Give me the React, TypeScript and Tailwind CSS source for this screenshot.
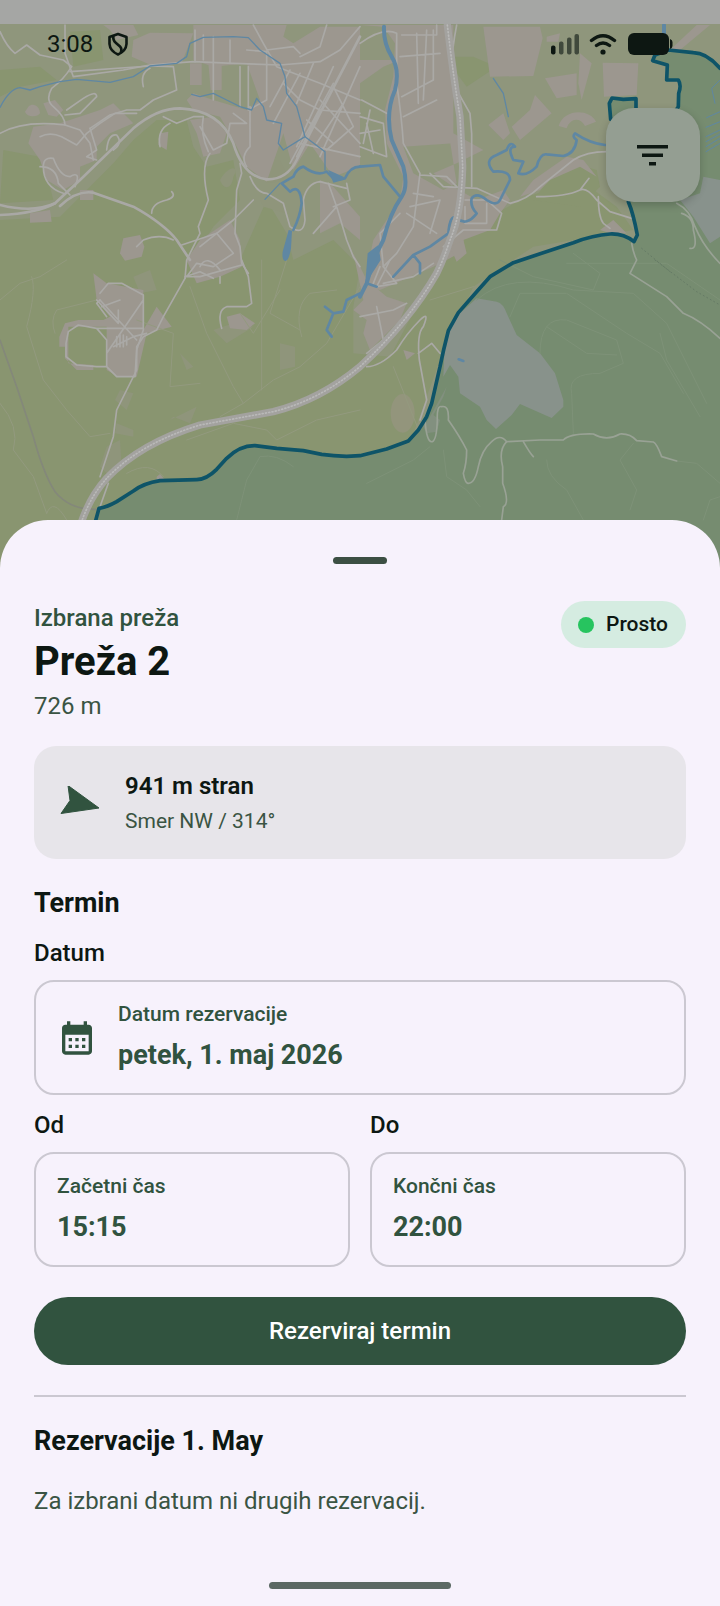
import { useState } from 'react';

interface PickerFieldProps {
  id: string;
  label: string;
  hint: string;
  value: string;
  withIcon?: boolean;
}

const urbanAreas = [
  'M310 75H400L415 105 350 120 330 90Z',
  'M450 98L580 100 545 190 465 200 395 170 400 120Z',
  'M580 75H860L850 110 880 130 960 80H1080V500L1000 530 930 430 880 510 850 400 800 545 740 500 700 420 660 350 580 330 560 300 580 280 640 300 740 330 780 300 740 190 640 200 580 180Z',
  'M570 190H605V255H570ZM625 190H665V270H632Z',
  'M1080 75L1150 80 1185 130 1180 230 1155 330 1160 430 1210 530 1200 600 1120 720 1090 860 1140 870 1230 830 1300 800 1340 780 1395 750 1390 720 1470 690 1500 640 1530 600 1510 570 1430 600 1360 560 1300 520 1370 490 1450 450 1360 400 1355 75H1300L1320 75 1330 300 1370 550 1330 570 1240 520 1210 440 1360 430V75Z',
  'M1450 80H1620L1628 115 1600 228 1470 230ZM1635 235L1730 220V285L1670 295ZM1740 160L1775 190 1745 300 1735 250ZM1808 188L1915 190 1910 285 1812 290Z',
  'M1590 330L1605 285 1655 340 1560 420 1535 380ZM1676 378C1690 325 1770 325 1788 365L1755 378C1740 350 1710 355 1700 385ZM1465 375L1510 340 1530 400 1510 420Z',
  'M1640 110L1680 100 1675 125 1640 125ZM2010 150L2090 75H2130L2040 150Z',
  'M1600 540L1700 470 1750 480 1790 530 1740 500 1650 540 1620 570 1560 590Z',
  'M1800 690L1840 660 1880 700 1830 700ZM1350 740L1390 720 1400 760 1370 785Z',
  'M100 380L180 370 300 330 340 310 400 370 330 400 290 440 290 480 240 500 240 540 190 570 140 540 120 480 85 430Z',
  'M85 320C100 305 120 320 120 340 110 355 80 350 75 335ZM130 310L165 300 190 330 170 350 145 345Z',
  'M370 715L420 705 433 740 425 770 375 782 360 760Z',
  'M480 400L505 395 500 450 475 435ZM570 360L640 350 680 400 660 460 610 470 590 400Z',
  'M960 540L1000 560 1080 650 1080 720 1020 670 960 700Z',
  'M920 220L960 180H1180L1240 120 1270 150 1150 200 1080 250 1010 250Z',
  'M600 720L690 660 720 720 725 800 660 830 590 850 560 780Z',
  'M280 820L320 850 430 870V990L470 920 515 980 440 1000 410 1130H355L320 1110V980L290 980H205V1090L280 1095V1110H230L195 1075V1040H178V1010L195 970 235 960H280L310 960 330 950 290 900Z',
  'M680 950L720 940 765 970 740 990 690 985ZM1060 760L1100 840 1160 890 1220 910 1200 960 1110 1050 1090 1000 1100 960 1060 930 1090 900Z',
  'M90 640L150 630 155 665 90 668ZM240 570H280V600H240Z',
  'M1210 1050L1245 1060 1220 1080ZM470 1430L480 1422 495 1440 470 1440Z',
];

const forestAreas = [
  'M0 660L180 650 240 590 340 490 400 420 470 360 560 360 580 440 620 500 700 480 720 600 640 680 590 760 720 780 800 600 860 700 880 780 1000 720 1080 800 1060 920 1060 1060 1170 1070 1260 900 1330 780 1450 660 1580 590 1740 540 1850 620 1900 690 1600 740 1420 860 1320 1080 1230 1330 1060 1370 760 1340 620 1440 450 1450 290 1540 230 1780 0 1780Z',
  'M10 450L120 470 150 560 160 600 0 610Z',
  'M1360 170H1420L1490 200 1400 260 1370 220Z',
  'M1690 480L1790 510 1800 560 1740 620 1600 600Z',
  'M210 95L300 90 310 180 220 200ZM0 210L120 200 170 240 60 260 0 290Z',
];

const fieldAreas = [
  'M660 540C690 490 720 500 700 530 695 570 670 570 660 540Z',
  'M400 830L450 810 470 870 420 880ZM540 1060L580 1100 560 1110ZM360 1170L400 1180 380 1230 345 1200ZM350 1270L400 1290 400 1310 345 1300Z',
  'M840 1030L885 1040 885 1100 840 1110ZM510 1260L590 1220 570 1270 520 1250ZM640 990L700 970 760 980 680 1030Z',
  'M760 480L840 480 870 540 800 550ZM780 600L840 600 860 640 790 620Z',
  'M320 1340L360 1320 365 1400 330 1430 300 1400Z',
];

const minorRoads = [
  'M0 95Q20 140 45 160L80 135 120 165 190 180 215 200Q190 240 155 265 135 300 160 320 195 350 195 375L240 390 270 430 280 480',
  'M0 400Q70 360 195 375M195 75V160L220 230 370 210 450 195 580 185 700 190 840 195 960 185 1020 150 1080 80',
  'M210 215L450 198 520 200 530 270 460 300 420 330 380 330 330 345 270 385',
  'M195 345L240 340 290 290Q290 270 250 295L200 330M430 260Q420 220 450 205',
  'M120 410Q150 395 185 410L230 435 260 400 300 370 345 340 410 340',
  'M190 580Q130 560 130 500 130 470 160 475 180 530 210 530 245 510 225 560M120 500Q170 500 175 550L210 585',
  'M270 385L290 450 260 470 290 480M320 450Q325 400 350 405 370 430 340 450',
  'M640 110V300M585 90V185M610 105V180M690 190V120M740 150L800 155V300L745 330V200M720 200V320',
  'M760 75L790 130 830 200 960 250 1080 300M870 210L810 320M900 220L820 370M940 190L890 310M1000 200L890 440M800 150L880 140 900 160M980 75L960 140 900 170',
  'M850 250L900 300 960 330 1080 340M900 430L1080 470M960 300L1080 430M920 360L1000 430M960 470L1080 200M1000 260L1060 380 980 450M1030 310L950 430',
  'M490 350L530 370 580 350 610 350Q600 400 625 455M480 440Q470 390 510 370M600 380L640 450 680 430 690 370 740 370 700 340M750 320V440Q720 470 740 500',
  'M630 460Q600 500 625 600L595 680 600 700 560 780 555 835M720 490L725 520 710 570 705 700 720 740 725 790 745 820',
  'M455 640Q455 610 500 600 530 590 515 575M520 720Q480 700 430 720L410 740M545 735L590 720 650 700 700 660 760 600',
  'M600 740L650 700 700 760 640 800 590 790 560 830 600 830 725 795M600 800Q620 760 660 810M750 530Q770 580 800 580L850 610 870 680Q910 710 915 660L910 600Q920 550 960 545L1040 565',
  'M985 550L1010 620 940 700M1010 620L1040 720 1060 770 1080 800M1040 550L1050 600 1000 620',
  'M1290 520L1330 560 1430 565 1530 610Q1580 600 1620 560L1720 480Q1760 455 1820 455M1610 590Q1700 590 1740 570 1760 560 1790 600L1830 635 1895 655M1740 570L1767 535M1795 590Q1795 650 1810 670L1830 685',
  'M1080 130Q1150 80 1190 100V250Q1205 350 1210 430L1260 520 1250 600 1240 680 1190 760 1150 800M1260 525L1340 530 1370 560',
  'M1370 75Q1340 230 1370 270L1410 340 1415 400V560M1200 170L1320 160M1205 105H1310V75M1205 290L1300 240V90M1210 350L1310 300M1250 100L1255 310M1280 90L1270 300',
  'M1080 350L1150 370 1160 470 1080 440M1080 400L1140 390M1085 300L1160 340M1100 370L1120 460M1110 330L1090 430',
  'M1230 620L1320 600 1290 700M1395 600H1460L1505 640 1490 690 1390 690 1330 740M1395 620V670H1460V610M1240 580L1300 590M1220 640L1310 700',
  'M1200 640L1140 700 1150 800 1190 850 1130 860 1170 780M1150 850L1240 830 1300 790M1080 950L1180 930 1220 910M1130 920L1150 1020 1100 1060M1140 800L1120 850',
  'M555 830L600 815 640 835M555 835L490 950 470 990 430 1010 410 1040V1110L350 1230 340 1310 320 1370 300 1430M325 1450L300 1520',
  'M300 880L325 850H365L430 885V990L410 1050 405 1130H350L320 1100V1020L290 985 235 975 205 995 198 1030V1070L230 1095 290 1100H320M290 985H430M300 900L410 1020M430 900L320 1060M305 920L360 900M355 930V970L290 900',
  'M350 1010V1040M360 1005V1040M370 1005V1040M380 1010V1035M340 1040L400 1010 440 1000M300 900L290 910 320 950',
  'M725 780L745 830 755 910 740 920H680Q650 930 665 985M660 830V850',
  'M1100 1100Q1140 1100 1190 1050 1220 1000 1260 960 1290 930 1270 980 1250 1000 1258 1080L1280 1200 1260 1260M1255 1060L1295 1030 1320 1060',
];

const hillRoads = [
  'M1895 730Q1900 760 1910 780L1890 820 2000 890 2050 940Q2100 960 2160 1015',
  'M2030 610Q2070 630 2085 680 2110 740 2160 790M2045 640Q2080 650 2080 690 2095 750 2070 745',
  'M1275 1260Q1280 1330 1297 1325 1310 1320 1312 1260 1310 1215 1325 1220 1348 1215 1345 1260 1380 1310 1400 1350 1400 1390 1390 1420 1395 1450 1405 1450 1425 1450 1435 1400 1445 1350 1475 1325 1500 1300 1520 1325L1620 1320 1690 1320Q1710 1300 1780 1302 1820 1325 1860 1302 1890 1300 1910 1322L1960 1326Q1970 1330 1985 1370L2030 1383',
  'M1520 1325Q1495 1350 1508 1400V1450Q1530 1510 1510 1520L1505 1560M1570 1325Q1590 1360 1600 1370',
];

const trails = [
  'M0 900L60 850 120 830 200 780M290 900L170 930Q150 960 165 1000',
  'M95 830Q110 870 80 980L130 1140 200 1230 270 1310 330 1300M0 1210Q60 1280 40 1350L100 1430 140 1540',
  'M570 860L620 1000 700 1160 730 1210M785 780V1170M860 780L810 940 900 990M905 1010Q880 920 930 880L1010 870',
  'M1080 860L980 1030 900 1100 820 1140 730 1210 660 1250M560 1320L700 1270 800 1290 830 1320 950 1260 1080 1230',
  'M380 1420Q450 1380 490 1430M1290 900L1420 860M1180 1100L1260 1300',
  'M410 960L520 1000 510 1160 600 1150M720 940L760 1000 840 870M200 1560Q160 1490 140 1540',
];

const hillTrails = [
  'M1430 900Q1530 810 1720 870L1900 880 2000 970 2120 1210M1530 950L1560 880 1700 880 1880 1000 1980 1060 2050 1180',
  'M1620 1060Q1620 950 1700 960L1850 1020 1870 1090 1800 1120Q1700 1120 1715 1180L1720 1300M1640 980L1760 1060 1850 1065',
  'M1330 1350L1340 1430 1400 1470 1440 1520M1100 1450L1240 1380 1290 1340M1640 1380Q1640 1430 1700 1470L1750 1560',
  'M1900 1330L1860 1380 1910 1470 1890 1530M2030 1383L2090 1390 2160 1450M1500 780L1600 830 1780 870 1800 820 1720 760',
  'M1980 1000L2000 1080 2100 1250M1700 790L2000 790 2160 900M2110 1560L2130 1500 2160 1490M710 1560L740 1440 780 1370Q830 1360 880 1400',
];

const streams = [
  'M0 322Q30 265 60 263L90 270 120 260 180 245 230 238 330 247 400 230 450 198 530 190 560 170 570 130 610 112 700 110 745 113 780 150 840 190 855 230 860 280 890 320 915 410 850 450 835 430 845 370 800 360 790 320 770 295 755 330 720 320 680 300 640 280 600 290 575 283',
  'M915 410L975 455 975 510M795 598L840 550M1480 235L1510 280 1525 350',
];

const rivers = [
  'M1080 500Q1050 500 1035 535L1005 540 980 515Q950 530 910 500 890 505 880 530L845 550 870 575Q900 550 905 610 900 650 880 690',
  'M1815 435Q1770 430 1725 400 1715 410 1730 420 1725 460 1690 468L1640 463Q1620 460 1610 500 1580 530 1555 520L1570 485 1540 480Q1520 440 1545 440 1530 420 1520 450L1490 465Q1450 480 1480 515 1530 510 1530 540L1500 600Q1490 620 1460 600 1430 575 1415 595 1410 620 1430 640 1400 680 1370 655 1350 640 1345 700L1290 740 1240 765 1180 830M1240 765L1260 790 1260 820M1080 500L1140 495 1150 530 1200 590M1100 850L1130 860M1080 880L1040 900 1030 935 1000 940 975 920M1000 940L980 990 995 1010',
];

const motorway =
  'M1342 75Q1360 230 1380 350L1388 500Q1385 640 1350 720 1330 780 1310 820 1230 960 1080 1100 960 1200 820 1235L600 1275Q420 1330 320 1435 270 1490 243 1570';

const reserveEdge =
  'M2160 205Q2120 158 2080 158L2005 150 1965 165 1958 182 2002 195 2000 240H2035Q2045 255 2036 280L2035 320 1960 430 1885 605Q1900 640 1912 705L1902 725Q1870 700 1830 702 1780 705 1720 728L1540 788 1470 830 1430 875 1375 938 1345 992Q1330 1050 1320 1100L1295 1210 1280 1250 1255 1290 1225 1323 1160 1347 1080 1367 1040 1369Q1000 1368 965 1363L910 1352 830 1345 765 1337Q720 1336 680 1375L650 1408Q620 1438 590 1439L480 1442Q430 1450 400 1473L350 1505Q320 1522 297 1525L286 1565 280 1590';

function TerrainMap() {
  return (
    <svg
      className="absolute inset-x-0 top-0 h-[570px] w-full"
      viewBox="0 0 2160 1710"
      preserveAspectRatio="xMidYMin slice"
      fill="none"
      strokeLinejoin="round"
      strokeLinecap="round"
      aria-hidden="true"
    >
      <rect width="2160" height="1710" fill="#8f967c" />
      <g fill="#899570">
        {forestAreas.map((d) => <path key={d} d={d} />)}
      </g>
      <g fill="#8f957b">
        {fieldAreas.map((d) => <path key={d} d={d} />)}
      </g>
      <g fill="#9c978f">
        {urbanAreas.map((d) => <path key={d} d={d} />)}
      </g>
      <ellipse cx="1208" cy="1240" rx="36" ry="58" fill="#93957c" />
      <g stroke="#939a7f" strokeWidth="3">
        {trails.map((d) => <path key={d} d={d} />)}
      </g>
      <g stroke="#aaa9a6" strokeWidth="5">
        {minorRoads.map((d) => <path key={d} d={d} />)}
      </g>

      {/* railway */}
      <path d="M0 1020L50 1160 100 1310Q130 1420 165 1475 210 1530 290 1528" stroke="#84887a" strokeWidth="5" />

      {/* main roads */}
      <g stroke="#a9a8a5" strokeWidth="8">
        <path d="M0 645Q110 640 165 610L240 540 400 385Q470 325 540 325 660 330 700 430 730 530 800 538 860 540 890 480L960 340 1080 110" />
        <path d="M0 615Q100 640 165 610M180 618Q230 570 280 578L400 620Q490 670 530 720L570 780" />
        <path d="M890 470L960 330M870 490L1000 250" strokeWidth="5" />
      </g>

      <g stroke="#5f87a3">
        {streams.map((d) => <path key={d} d={d} strokeWidth="4" />)}
        {rivers.map((d) => <path key={d} d={d} strokeWidth="8" />)}
        <path d="M1152 80Q1150 130 1175 170 1200 210 1185 270 1155 340 1175 420L1210 500Q1225 560 1205 590 1170 640 1150 720L1120 780 1100 850 1080 890" strokeWidth="12" />
        <path d="M1992 75V100" strokeWidth="12" />
      </g>
      <g fill="#5f87a3">
        <path d="M1135 735L1142 780 1110 830 1095 860 1103 760Z" />
        <path d="M866 690L876 692 873 745Q866 785 855 783 845 780 848 755Z" />
        <path d="M985 510L1030 530V540L1000 548Z" />
      </g>

      <path d={motorway} stroke="#a3a29f" strokeWidth="22" />
      <path d={motorway} stroke="#b9b9b8" strokeWidth="5" strokeDasharray="3 7" />

      {/* reserve */}
      <path d={`${reserveEdge}V1710H2160Z`} fill="#768c70" />
      <path d="M2040 600L2100 580 2110 530 2160 540V710L2130 730 2080 650Z" fill="#88928c" />
      <path d="M1430 895L1490 905Q1510 910 1520 940L1550 1005 1620 1060 1665 1120 1690 1200V1220L1655 1254 1560 1212 1535 1245 1488 1287 1460 1260 1440 1220 1380 1180 1375 1130 1350 1095 1330 1130 1335 1010 1380 940Z" fill="#88928b" />
      <path d="M1340 1160L1290 1250 1270 1280 1280 1300 1310 1295 1320 1260 1300 1245 1330 1190Z" fill="#82907f" />
      <path d="M1376 1078L1390 1083" stroke="#5f87a3" strokeWidth="8" />
      <g stroke="#7e9278" strokeWidth="3">
        {hillTrails.map((d) => <path key={d} d={d} />)}
      </g>
      <path
        d="M2160 240L2135 265 2145 310M2120 353L2160 335M2118 382L2160 365M2118 410L2160 390M2118 425L2160 402M2118 440L2160 415M2118 455L2160 430"
        stroke="#5f87a3"
        strokeWidth="3"
      />
      <g stroke="#99a295" strokeWidth="5">
        {hillRoads.map((d) => <path key={d} d={d} />)}
      </g>
      <path d="M1925 745L2010 815M1965 780L2090 875 2160 915" stroke="#667b66" strokeWidth="3" strokeDasharray="3 9" />
      <path d={reserveEdge} stroke="#0e5468" strokeWidth="11" />
      <path d="M1832 358L1828 310 1836 294 1870 298 1908 296 1908 340" fill="#768c70" stroke="#0e5468" strokeWidth="11" />
    </svg>
  );
}

function StatusBar() {
  return (
    <div className="relative flex h-[39px] items-center justify-between pr-[47px] pl-[47px] text-[#0d1712]">
      <div className="flex items-center gap-[15px] text-2xl">
        <span>3:08</span>
        <svg className="h-6 w-5" viewBox="0 0 20 24" fill="none" stroke="currentColor" strokeWidth="2.6" strokeLinejoin="round" aria-hidden="true">
          <path d="M10 2L18.500 5V12Q18 19 10 22.500 2 19 1.500 12V5Z" />
          <path d="M5.500 4Q4.500 8 8 11L12 14.500Q14.500 17 12.500 21" />
        </svg>
      </div>
      <div className="flex items-center gap-2.5">
        <svg className="h-6 w-7" viewBox="0 0 28 24" fill="currentColor" aria-hidden="true">
          <rect x="0" y="13.500" width="4.500" height="9" rx="2" />
          <g opacity="0.6">
            <rect x="8" y="9.500" width="4.500" height="13" rx="2" />
            <rect x="16" y="5.500" width="4.500" height="17" rx="2" />
            <rect x="23.500" y="2" width="4.500" height="20.500" rx="2" />
          </g>
        </svg>
        <svg className="h-6 w-7" viewBox="0 0 28 24" fill="none" stroke="currentColor" strokeWidth="3.400" strokeLinecap="round" aria-hidden="true">
          <path d="M2.500 8.500Q14-1 25.500 8.500M7.500 13.500Q14 8.500 20.500 13.500" />
          <circle cx="14" cy="20" r="2.600" fill="currentColor" stroke="none" />
        </svg>
        <svg className="h-6 w-[46px]" viewBox="0 0 46 24" fill="currentColor" aria-hidden="true">
          <rect x="1" y="1" width="41" height="22" rx="6" />
          <path d="M43 7Q45.500 8 45.500 10V14Q45.500 16 43 17Z" />
        </svg>
      </div>
    </div>
  );
}

function CalendarIcon() {
  return (
    <svg className="h-10 w-10 shrink-0" viewBox="0 0 24 24" fill="currentColor" aria-hidden="true">
      <path d="M19 4h-1V2h-2v2H8V2H6v2H5c-1.110 0-1.990.9-1.990 2L3 20c0 1.100.89 2 2 2h14c1.100 0 2-.9 2-2V6c0-1.100-.9-2-2-2zm0 16H5V10h14v10zM9 14H7v-2h2v2zm4 0h-2v-2h2v2zm4 0h-2v-2h2v2zm-8 4H7v-2h2v2zm4 0h-2v-2h2v2zm4 0h-2v-2h2v2z" />
    </svg>
  );
}

function PickerField({ id, label, hint, value, withIcon }: PickerFieldProps) {
  return (
    <div className="flex flex-1 flex-col gap-2.5">
      <label htmlFor={id} className="text-2xl leading-[34px] font-medium text-[#0d1712]">
        {label}
      </label>
      <button
        id={id}
        type="button"
        className="flex items-center gap-[21px] rounded-[20px] border-2 border-[#cbc8d1] px-[21px] py-[18px] text-left text-[#31533f]"
      >
        {withIcon && <CalendarIcon />}
        <span className="flex flex-col gap-[7px]">
          <span className="text-[21px] leading-7 font-medium">{hint}</span>
          <span className="text-[27px] leading-10 font-bold">{value}</span>
        </span>
      </button>
    </div>
  );
}

export default function App() {
  const [showFilters, setShowFilters] = useState(false);

  return (
    <div className="relative min-h-screen bg-[#f7f2fc] font-['Roboto',sans-serif]">
      <TerrainMap />

      <header className="relative h-[520px]">
        <div className="h-6 bg-[#a5a6a4]" />
        <StatusBar />
        <div className="flex justify-end pt-[45px] pr-5">
          <button
            type="button"
            aria-label="Filtri"
            aria-pressed={showFilters}
            onClick={() => setShowFilters(!showFilters)}
            className="flex h-[94px] w-[94px] items-center justify-center rounded-[28px] bg-[#949e92] text-[#0d1712] shadow-[0_3px_8px_rgba(0,0,0,0.2)]"
          >
            <svg className="h-6 w-8" viewBox="0 0 32 24" fill="currentColor" aria-hidden="true">
              <path d="M0 2h31v3.500H0zM5 10.500h21V14H5zM12 19h7v3.500h-7z" />
            </svg>
          </button>
        </div>
      </header>

      <main className="relative flex flex-col rounded-t-[48px] bg-[#f7f2fc] px-[34px] pt-[37px] pb-[17px]">
        <div className="h-[7px] w-[54px] self-center rounded-full bg-[#3c4f43]" />

        <div className="mt-[37px] flex items-start justify-between">
          <div>
            <p className="text-2xl leading-[34px] font-medium text-[#31533f]">Izbrana preža</p>
            <h1 className="text-[40px] leading-[54px] font-bold text-[#0d1712]">Preža 2</h1>
            <p className="text-2xl leading-[34px] text-[#3a5443]">726 m</p>
          </div>
          <div className="flex items-center gap-3 rounded-full bg-[#d5ece1] py-[9px] pr-[18px] pl-[17px] text-[21px] leading-[29px] font-medium text-[#0d1712]">
            <span className="h-4 w-4 rounded-full bg-[#27c45f]" />
            Prosto
          </div>
        </div>

        <section className="mt-[23px] flex items-center gap-6 rounded-[22px] bg-[#e7e5ea] px-[26px] pt-[23px] pb-6">
          <svg className="h-8 w-[41px]" viewBox="0 0 41 32" fill="#31533f" aria-hidden="true">
            <path d="M8 -1.500L39 21 1 26.500 10 13.500Z" transform="translate(0 1)" stroke="#31533f" strokeLinejoin="round" />
          </svg>
          <div className="flex flex-col gap-1">
            <p className="text-2xl leading-[34px] font-semibold text-[#0d1712]">941 m stran</p>
            <p className="text-[21px] leading-7 text-[#3a5443]">Smer NW / 314°</p>
          </div>
        </section>

        <h2 className="mt-6 text-[27px] leading-10 font-bold text-[#0d1712]">Termin</h2>
        <div className="mt-[13px] flex">
          <PickerField id="date" label="Datum" hint="Datum rezervacije" value="petek, 1. maj 2026" withIcon />
        </div>
        <div className="mt-[13px] flex gap-5">
          <PickerField id="start" label="Od" hint="Začetni čas" value="15:15" />
          <PickerField id="end" label="Do" hint="Končni čas" value="22:00" />
        </div>

        <button
          type="button"
          className="mt-[30px] rounded-full bg-[#31533f] py-[17px] text-2xl leading-[34px] font-medium text-white"
        >
          Rezerviraj termin
        </button>

        <hr className="mt-[30px] border-t-2 border-[#cbc8d1]" />

        <h2 className="mt-6 text-[27px] leading-10 font-bold text-[#0d1712]">Rezervacije 1. May</h2>
        <p className="mt-[23px] text-2xl leading-[34px] text-[#3a5443]">Za izbrani datum ni drugih rezervacij.</p>

        <div className="mt-16 h-[7px] w-[182px] self-center rounded-full bg-[#5c6964]" />
      </main>
    </div>
  );
}
